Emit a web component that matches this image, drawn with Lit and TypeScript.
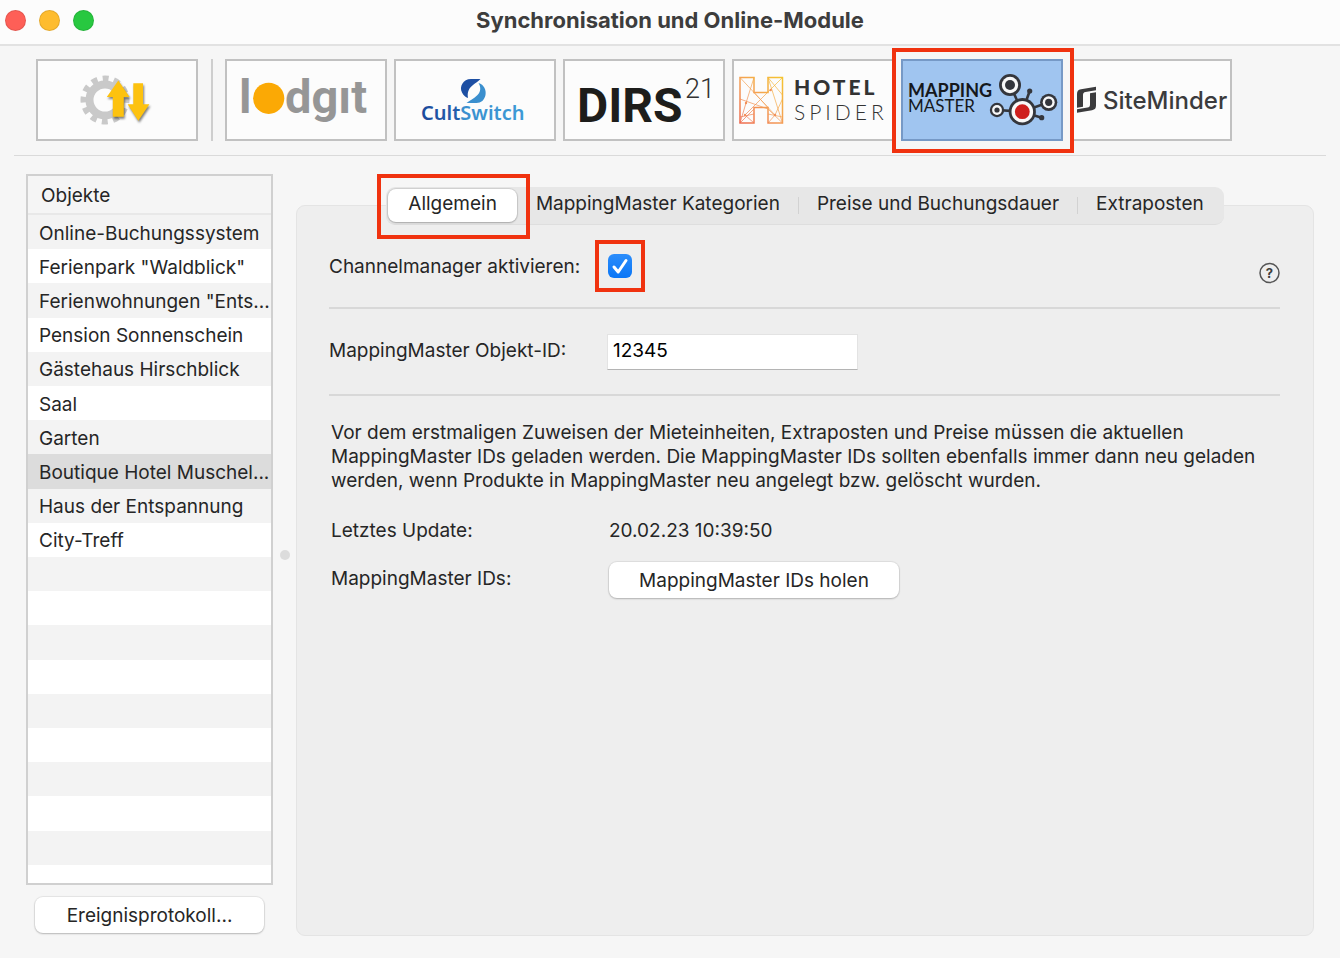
import { LitElement, html, css, svg } from "lit";
import { customElement, property, state } from "lit/decorators.js";
import { classMap } from "lit/directives/class-map.js";

const gearLogo = svg`
  <g fill="none" stroke="#c9c9c9">
    <circle cx="69" cy="41" r="15.5" stroke-width="8"/>
    <circle cx="69" cy="41" r="21.5" stroke-width="6" stroke-dasharray="6 5.257" stroke-dashoffset="3"/>
  </g>
  <g fill="#fdc20f" class="lift">
    <path d="M82.3 21.5 93.6 38H87.8V57.8H76.8V38H70.8Z"/>
    <path d="M97.3 24.3H107V45.3H113.4L102.3 61.8 91.6 45.3H97.3Z"/>
  </g>`;

const lodgitLogo = svg`
  <g class="t-lodgit"><text x="14" y="54">l</text><text x="60" y="54">dgıt</text></g>
  <circle cx="43.700" cy="39.3" r="15.6" fill="#fba905"/>`;

const cultLogo = svg`
  <defs>
    <linearGradient id="cs" x1="28" x2="131" y1="0" y2="0" gradientUnits="userSpaceOnUse">
      <stop offset="0" stop-color="#1c4a9c"/><stop offset=".36" stop-color="#2560ad"/>
      <stop offset=".39" stop-color="#3a8fce"/><stop offset="1" stop-color="#3d9ad6"/>
    </linearGradient>
  </defs>
  <path fill="#1d4fa3" d="M86.500 20H77C69 20 65 28 68 33.500C69.400 36.500 71.500 38 74 39C73 33 75 29 79 26C81.500 24 84 22.500 86.500 20Z"/>
  <path fill="#3a8fce" d="M84.500 24C90 25.500 92.500 31 91.500 36C90.500 41 87 44 82.500 44H72.500C75.500 41.500 80 39.500 83.500 36C87 32.500 87 28 84.500 24Z"/>
  <text class="t-cult" x="27" y="61" fill="url(#cs)">CultSwitch</text>`;

const dirsLogo = svg`
  <text class="t-dirs" x="14" y="63">DIRS</text>
  <text class="t-21" x="122" y="39">21</text>`;

const spiderLogo = svg`
  <defs>
    <linearGradient id="hs" x1="7" x2="51" y1="64" y2="18" gradientUnits="userSpaceOnUse">
      <stop offset="0" stop-color="#ee6a50"/><stop offset=".5" stop-color="#f4a055"/><stop offset="1" stop-color="#f5c52f"/>
    </linearGradient>
  </defs>
  <g fill="none" stroke="url(#hs)">
    <path stroke-width="1.500" d="M8 18.500H22V33.500H36V18.500H50.500V64H36V48.500H22V64H8Z"/>
    <path stroke-width=".7" d="M8 18.500 43 56M50.500 18.500 13 56M22 18.500 14 44 8 64M8 40 36 50M36 18.500 50.500 36M36 18.500 50.500 64M8 64 22 50M8 58 22 55M22 64 13 56M50.500 64 36 50M36 55 50.500 58M36 64 43 56 50.500 40M22 33.500 36 48.500"/>
  </g>
  <g fill="#f0905a"><circle cx="14" cy="44" r="1.200"/><circle cx="38.700" cy="31" r="1.200"/><circle cx="13" cy="56" r="1.200"/><circle cx="43" cy="56" r="1.200"/></g>
  <g class="t-spider"><text class="strong" x="62" y="36">HOTEL</text><text class="thin" x="62" y="61">SPIDER</text></g>`;

const mappingLogo = svg`
  <g class="t-mapping"><text class="strong" x="7" y="38">MAPPING</text><text x="7" y="53">MASTER</text></g>
  <g stroke="#34363c" stroke-width="2.600" fill="none" stroke-linecap="round">
    <path d="M109 26 121.300 52.700 147.700 43.300M96 51 121.300 52.700 140.700 58.700M121.300 52.700 128.700 32"/>
  </g>
  <g fill="#34363c">
    <circle cx="128.700" cy="32" r="2.600"/><circle cx="140.700" cy="58.700" r="2.600"/>
    <circle cx="109" cy="26" r="11"/><circle cx="96" cy="51" r="7.200"/>
    <circle cx="147.700" cy="43.300" r="8.600"/><circle cx="121.300" cy="52.700" r="13.600"/>
  </g>
  <g fill="#f8f8f8">
    <circle cx="109" cy="26" r="8.200"/><circle cx="96" cy="51" r="4.900"/>
    <circle cx="147.700" cy="43.300" r="6"/><circle cx="121.300" cy="52.700" r="10.800"/>
  </g>
  <g fill="#34363c">
    <circle cx="109" cy="26" r="5"/><circle cx="96" cy="51" r="2.600"/><circle cx="147.700" cy="43.300" r="3.600"/>
  </g>
  <circle cx="121.300" cy="52.700" r="7.400" fill="#cf1f1d"/>`;

const minderLogo = svg`
  <g fill="#3b3b3d">
    <path d="M26 27.800 11 30.300C8 30.900 7 32.300 7 35V48.800L13 47.800V36C13 34 13.800 33.200 15.500 32.900L26 31.200Z"/>
    <path d="M7 53.800 22 51.200C25 50.600 26 49.200 26 46.500V33.200L20 34.200V45.500C20 47.500 19.200 48.300 17.500 48.600L7 50.300Z"/>
  </g>
  <text class="t-minder" x="33" y="50">SiteMinder</text>`;

const modules = [
  { id: "sync", label: "Synchronisation", logo: gearLogo },
  { id: "lodgit", label: "lodgit", logo: lodgitLogo },
  { id: "cultswitch", label: "CultSwitch", logo: cultLogo },
  { id: "dirs21", label: "DIRS21", logo: dirsLogo },
  { id: "hotelspider", label: "Hotel Spider", logo: spiderLogo },
  { id: "mappingmaster", label: "MappingMaster", logo: mappingLogo },
  { id: "siteminder", label: "SiteMinder", logo: minderLogo },
];

const objects = [
  "Online-Buchungssystem",
  'Ferienpark "Waldblick"',
  'Ferienwohnungen "Ents...',
  "Pension Sonnenschein",
  "Gästehaus Hirschblick",
  "Saal",
  "Garten",
  "Boutique Hotel Muschel...",
  "Haus der Entspannung",
  "City-Treff",
];
const EMPTY_ROWS = 10;

const tabs = ["Allgemein", "MappingMaster Kategorien", "Preise und Buchungsdauer", "Extraposten"];

const base = css`
  * { box-sizing: border-box; }
  button, input { font: inherit; color: inherit; margin: 0; }
  .push {
    height: 36px;
    border: 0;
    border-radius: 8px;
    background: #fff;
    box-shadow: 0 0 1px 1px #00000012, 0 1px 2px #00000033;
  }
`;

@customElement("module-bar")
export class ModuleBar extends LitElement {
  @property() selected = "";

  static styles = [base, css`
    :host { display: block; margin: 0 14px; padding: 13px 22px 14px; border-bottom: 1px solid #dadada; }
    .bar { display: flex; gap: 7px; }
    .rule { width: 2px; background: #cecece; margin: 0 5px 0 6px; }
    .tile {
      position: relative;
      flex: none;
      width: 162px;
      height: 82px;
      padding: 0;
      border: 2px solid #c1c1c1;
      background: #fcfcfc;
    }
    .tile svg { display: block; width: 158px; height: 78px; }
    .tile.on { z-index: 1; background: #a0c5f0; border-color: #7699c6; box-shadow: 0 0 0 8px #f6f6f6; }
    .tile.on::after { content: ""; position: absolute; inset: -13px -13px -14px -11px; border: 4px solid #f0320f; }
    .lift { filter: drop-shadow(1px 2px 1px #00000080); }
    .t-lodgit { font: 700 47px Roboto, sans-serif; fill: #969696; }
    .t-cult { font: 600 20px "Noto Sans", sans-serif; }
    .t-dirs { font: 700 48px Roboto, sans-serif; fill: #1d1d1b; }
    .t-21 { font: 300 27px Roboto, sans-serif; fill: #333; }
    .t-spider { fill: #333; }
    .t-spider .strong { font: 900 21px Lato, sans-serif; letter-spacing: 3px; }
    .t-spider .thin { font: 300 21px Lato, sans-serif; letter-spacing: 4px; }
    .t-mapping { font: 400 17px Lato, sans-serif; fill: #15181d; }
    .t-mapping .strong { font-size: 18px; font-weight: 700; }
    .t-minder { font: 500 24px Inter, sans-serif; fill: #3b3b3d; }
  `];

  render() {
    return html`<nav class="bar" aria-label="Module">
      ${modules.map((m, i) => html`
        ${i === 1 ? html`<span class="rule"></span>` : ""}
        <button class=${classMap({ tile: true, on: m.id === this.selected })} aria-label=${m.label}
          @click=${() => this.dispatchEvent(new CustomEvent("pick", { detail: m.id }))}>
          <svg viewBox="2 2 158 78" aria-hidden="true">${m.logo}</svg>
        </button>`)}
    </nav>`;
  }
}

@customElement("object-list")
export class ObjectList extends LitElement {
  @state() current = 7;

  static styles = [base, css`
    :host { display: flex; flex-direction: column; }
    .box { flex: 1; display: flex; flex-direction: column; border: 2px solid #d0d0d0; background: #fff; }
    .head { margin: 0; height: 39px; padding: 0 13px; font-size: 19px; font-weight: 400; line-height: 39px; background: #f5f5f5; border-bottom: 2px solid #e8e8e8; }
    .rows { flex: 1; display: flex; flex-direction: column; margin: 0; padding: 0; list-style: none; }
    .row { flex: 1 0 34px; display: flex; align-items: center; padding: 2px 0 0 11px; white-space: nowrap; overflow: hidden; }
    .row:nth-child(odd) { background: #f3f3f3; }
    .row.on { background: #dcdcdc; }
    .row:last-child { flex: none; height: 18px; }
    .push { margin: 12px 9px 3px; }
  `];

  render() {
    return html`
      <div class="box">
        <h2 class="head" id="head">Objekte</h2>
        <ul class="rows" role="listbox" aria-labelledby="head">
          ${objects.map((o, i) => html`<li role="option" aria-selected=${i === this.current}
            class=${classMap({ row: true, on: i === this.current })} @click=${() => (this.current = i)}>${o}</li>`)}
          ${Array.from({ length: EMPTY_ROWS }, () => html`<li class="row" role="presentation"></li>`)}
        </ul>
      </div>
      <button class="push">Ereignisprotokoll...</button>`;
  }
}

@customElement("module-settings")
export class ModuleSettings extends LitElement {
  @state() tab = 0;

  static styles = [base, css`
    :host { display: flex; flex-direction: column; padding-top: 13px; }
    .tabs { position: relative; z-index: 1; align-self: center; display: flex; height: 38px; padding: 2px; border-radius: 9px; background: #e7e7e7; border-bottom: 1px solid #dedede; }
    .tab { position: relative; border: 0; background: none; padding: 0 18px 5px; border-radius: 8px; white-space: nowrap; }
    .tab.on { background: #fff; box-shadow: 0 0 1px 1px #0000001a, 0 1px 2px #00000033; padding: 0 20px 5px; }
    .tab.on::after { content: ""; position: absolute; inset: -15px -13px -17px -11px; border: 4px solid #f0320f; }
    .split { width: 1px; margin: 8px 0; background: #d2d2d2; }
    .split.off { background: none; }
    .panel { flex: 1; margin-top: -20px; padding: 19px 33px 0 32px; border: 1px solid #e4e4e4; border-radius: 9px; background: #eee; }
    .line { display: grid; grid-template-columns: 278px 1fr auto; align-items: center; }
    .ruled { border-bottom: 2px solid #d8d8d8; }
    .first { height: 84px; }
    .second { height: 87px; }
    .mark { justify-self: start; display: grid; place-items: center; width: 50px; height: 52px; margin-left: -12px; border: 4px solid #f0320f; }
    .check { appearance: none; width: 24px; height: 24px; border-radius: 6px; background: linear-gradient(#2c8dfb, #0a76f6); }
    .tick { width: 24px; height: 24px; pointer-events: none; }
    .check, .tick { grid-area: 1 / 1; }
    .check:not(:checked) { background: #fff; }
    .help { padding: 0; border: 0; background: none; width: 22px; height: 22px; margin-top: 14px; }
    .help svg { display: block; }
    .help text { font: 700 13px Inter, sans-serif; fill: #3d3d3d; }
    .field { width: 251px; height: 36px; padding: 0 5px 3px; border: 1px solid #e3e3e3; border-bottom-color: #b4b4b4; background: #fff; color: #000; outline: 0; }
    .cap { padding-bottom: 3px; }
    .body { padding: 25px 0 0 2px; }
    .note { margin: 0 0 25px; line-height: 24px; }
    .stamp { height: 24px; margin-bottom: 20px; }
    .fetch { justify-self: start; width: 290px; }
  `];

  render() {
    return html`
      <div class="tabs" role="tablist">
        ${tabs.map((t, i) => html`
          ${i ? html`<span class=${classMap({ split: true, off: i === this.tab || i === this.tab + 1 })}></span>` : ""}
          <button role="tab" aria-selected=${i === this.tab} class=${classMap({ tab: true, on: i === this.tab })}
            @click=${() => (this.tab = i)}>${t}</button>`)}
      </div>
      <section class="panel">
        <div class="line ruled first">
          <label for="active">Channelmanager aktivieren:</label>
          <span class="mark">
            <input class="check" id="active" type="checkbox" checked>
            <svg class="tick" viewBox="0 0 24 24" fill="none" stroke="#fff" stroke-width="3" stroke-linecap="round" stroke-linejoin="round"><path d="M6 13 10.200 18 18 6.500"/></svg>
          </span>
          <button class="help" aria-label="Hilfe">
            <svg width="22" height="22" viewBox="0 0 22 22"><circle cx="11.500" cy="11" r="9.500" fill="none" stroke="#555" stroke-width="1.500"/><text x="11.500" y="15.500" text-anchor="middle">?</text></svg>
          </button>
        </div>
        <div class="line ruled second">
          <label class="cap" for="oid">MappingMaster Objekt-ID:</label>
          <input class="field" id="oid" type="text" value="12345">
        </div>
        <div class="body">
          <p class="note">Vor dem erstmaligen Zuweisen der Mieteinheiten, Extraposten und Preise müssen die aktuellen MappingMaster IDs geladen werden. Die MappingMaster IDs sollten ebenfalls immer dann neu geladen werden, wenn Produkte in MappingMaster neu angelegt bzw. gelöscht wurden.</p>
          <div class="line stamp"><span>Letztes Update:</span><span>20.02.23 10:39:50</span></div>
          <div class="line"><span class="cap">MappingMaster IDs:</span><button class="push fetch">MappingMaster IDs holen</button></div>
        </div>
      </section>`;
  }
}

@customElement("app-root")
export class AppRoot extends LitElement {
  @state() module = "mappingmaster";

  static styles = [base, css`
    :host {
      display: flex;
      flex-direction: column;
      min-height: 100vh;
      background: #f6f6f6;
      color: #262626;
      font: 400 19px Inter, "Liberation Sans", sans-serif;
    }
    .title { display: grid; grid-template-columns: 1fr auto 1fr; align-items: center; height: 46px; padding: 0 5px 4px; background: #fcfcfc; border-bottom: 2px solid #e2e2e2; }
    .lights { display: flex; gap: 13px; }
    .light { width: 21px; height: 21px; padding: 0; border: 1px solid #0000001a; border-radius: 50%; }
    .close { background: #fe5f57; }
    .min { background: #febc2e; }
    .max { background: #28c840; }
    .name { margin: 0; font-size: 22px; font-weight: 700; color: #3d3d3d; }
    .main { flex: 1; display: grid; grid-template-columns: 247px 23px minmax(0, 1fr); padding: 18px 26px 22px; }
    .grip { place-self: center; width: 10px; height: 10px; border-radius: 50%; background: #dcdcdc; }
  `];

  render() {
    return html`
      <header class="title">
        <div class="lights">
          <button class="light close" aria-label="Schließen"></button>
          <button class="light min" aria-label="Minimieren"></button>
          <button class="light max" aria-label="Zoomen"></button>
        </div>
        <h1 class="name">Synchronisation und Online-Module</h1>
      </header>
      <module-bar .selected=${this.module} @pick=${(e: CustomEvent) => (this.module = e.detail)}></module-bar>
      <main class="main">
        <object-list></object-list>
        <span class="grip"></span>
        <module-settings></module-settings>
      </main>`;
  }
}
